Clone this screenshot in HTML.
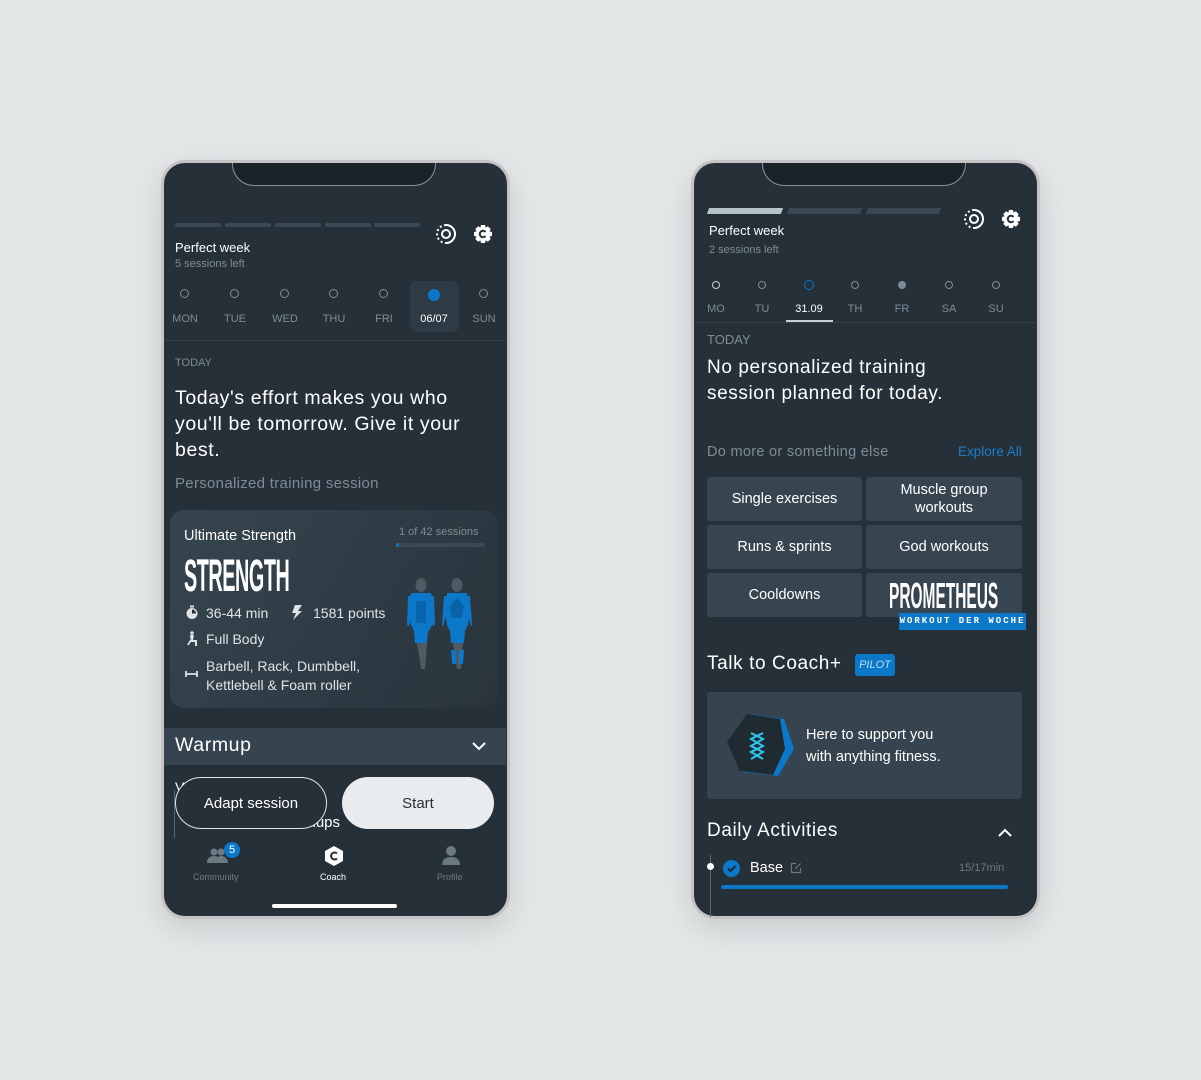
<!DOCTYPE html>
<html><head><meta charset="utf-8">
<style>
*{margin:0;padding:0;box-sizing:border-box}
body{width:1201px;height:1080px;background:#e3e7e8;position:relative;overflow:hidden;font-family:"Liberation Sans",sans-serif;color:#fff}
.a{position:absolute}
.t{position:absolute;white-space:nowrap;line-height:1}
.phone{position:absolute;width:349px;height:759px;border-radius:24px;background:#263038;border:3px solid #c8c2c7;overflow:hidden;box-shadow:0 10px 30px rgba(0,0,0,.12)}
.notch{position:absolute;top:-3px;width:204px;height:26px;background:#1b2328;border:1px solid #8a9399;border-top:none;border-radius:0 0 22px 22px}
.g{color:#7f8c95}
.day{position:absolute;width:50px;text-align:center;font-size:11px;color:#7f8c95}
.dot{position:absolute;width:9px;height:9px;border:1px solid #7f8c95;border-radius:50%}
.tile{position:absolute;background:#364550;border-radius:3px;display:flex;align-items:center;justify-content:center;text-align:center;font-size:14.5px;line-height:18px}
.h{letter-spacing:0.6px}
</style></head><body>

<!-- LEFT PHONE -->
<div class="phone" style="left:161px;top:160px">
  <div class="notch" style="left:68px"></div>
</div>
<div class="a" style="left:175px;top:223px;width:46px;height:4px;border-radius:2px;background:#3a4a55"></div>
<div class="a" style="left:225px;top:223px;width:46px;height:4px;border-radius:2px;background:#3a4a55"></div>
<div class="a" style="left:275px;top:223px;width:46px;height:4px;border-radius:2px;background:#3a4a55"></div>
<div class="a" style="left:325px;top:223px;width:46px;height:4px;border-radius:2px;background:#3a4a55"></div>
<div class="a" style="left:374px;top:223px;width:46px;height:4px;border-radius:2px;background:#3a4a55"></div>
<svg class="a" style="left:435px;top:223px" width="22" height="22" viewBox="0 0 22 22"><path d="M11 2a9 9 0 0 1 0 18" fill="none" stroke="#fff" stroke-width="2"/><path d="M11 2a9 9 0 0 0 0 18" fill="none" stroke="#fff" stroke-width="2" stroke-dasharray="2 2.5"/><circle cx="11" cy="11" r="4" fill="none" stroke="#fff" stroke-width="2"/></svg>
<svg class="a" style="left:473px;top:224px" width="20" height="20" viewBox="0 0 20 20"><path d="M8 1h4l.6 2.6 2.3-1.3 2.8 2.8-1.3 2.3L19 8v4l-2.6.6 1.3 2.3-2.8 2.8-2.3-1.3L12 19H8l-.6-2.6-2.3 1.3-2.8-2.8 1.3-2.3L1 12V8l2.6-.6-1.3-2.3 2.8-2.8 2.3 1.3z" fill="#fff"/><path d="M12.5 8a3.2 3.2 0 1 0 0 4" fill="none" stroke="#263038" stroke-width="2"/></svg>
<div class="t" style="left:175px;top:241px;font-size:13px">Perfect week</div>
<div class="t g" style="left:175px;top:259px;font-size:11px">5 sessions left</div>
<div class="a" style="left:410px;top:281px;width:49px;height:51px;border-radius:7px;background:#2f3b44"></div>
<div class="dot" style="left:180px;top:289px"></div><div class="day" style="left:160px;top:313px">MON</div>
<div class="dot" style="left:230px;top:289px"></div><div class="day" style="left:210px;top:313px">TUE</div>
<div class="dot" style="left:280px;top:289px"></div><div class="day" style="left:260px;top:313px">WED</div>
<div class="dot" style="left:329px;top:289px"></div><div class="day" style="left:309px;top:313px">THU</div>
<div class="dot" style="left:379px;top:289px"></div><div class="day" style="left:359px;top:313px">FRI</div>
<div class="a" style="left:428px;top:289px;width:12px;height:12px;border-radius:50%;background:#0b78c9"></div><div class="day" style="left:409px;top:313px;color:#fff">06/07</div>
<div class="dot" style="left:479px;top:289px"></div><div class="day" style="left:459px;top:313px">SUN</div>
<div class="a" style="left:164px;top:340px;width:342px;height:1px;background:#34404a"></div>
<div class="t g" style="left:175px;top:358px;font-size:11px">TODAY</div>
<div class="a h" style="left:175px;top:385px;font-size:19.5px;line-height:26px;white-space:nowrap">Today's effort makes you who<br>you'll be tomorrow. Give it your<br>best.</div>
<div class="t g" style="left:175px;top:476px;font-size:15px;letter-spacing:0.3px">Personalized training session</div>
<div class="a" style="left:170px;top:510px;width:328px;height:198px;border-radius:14px;background:linear-gradient(120deg,#36454f,#29343c)"></div>
<div class="t" style="left:184px;top:529px;font-size:14.5px">Ultimate Strength</div>
<div class="t g" style="left:399px;top:527px;font-size:11px">1 of 42 sessions</div>
<div class="a" style="left:396px;top:543px;width:89px;height:4px;border-radius:2px;background:#3a4a55"></div>
<div class="a" style="left:396px;top:543px;width:3px;height:4px;border-radius:2px;background:#0b78c9"></div>
<div class="t" style="left:184px;top:553px;font-size:45px;font-weight:bold;transform:scaleX(.44);transform-origin:left top;letter-spacing:-1px">STRENGTH</div>
<svg class="a" style="left:185px;top:605px" width="14" height="15" viewBox="0 0 14 15"><circle cx="7" cy="8.5" r="5.5" fill="#dfe3e6"/><rect x="5" y="0.5" width="4" height="2" fill="#dfe3e6"/><path d="M7 8.5V4.5A4 4 0 0 1 11 8.5z" fill="#263038"/></svg>
<div class="t" style="left:206px;top:606px;font-size:14px;color:#dfe3e6">36-44 min</div>
<svg class="a" style="left:291px;top:605px" width="12" height="15" viewBox="0 0 12 15"><path d="M4 0h7L7 6h4L2 15l3-7H1z" fill="#dfe3e6"/></svg>
<div class="t" style="left:313px;top:606px;font-size:14px;color:#dfe3e6">1581 points</div>
<svg class="a" style="left:186px;top:631px" width="12" height="15" viewBox="0 0 12 15"><g fill="#dfe3e6"><circle cx="6" cy="2" r="1.8"/><path d="M4 4h4l-1 5h4v2H5z"/><path d="M1 14l3-5h2l-3 5zM9 11h2v4H9z"/></g></svg>
<div class="t" style="left:206px;top:632px;font-size:14px;color:#dfe3e6">Full Body</div>
<svg class="a" style="left:185px;top:670px" width="13" height="8" viewBox="0 0 13 8"><path d="M1 1v6M12 1v6M1 4h11" stroke="#dfe3e6" stroke-width="1.8"/></svg>
<div class="a" style="left:206px;top:657px;font-size:14px;line-height:19px;color:#dfe3e6">Barbell, Rack, Dumbbell,<br>Kettlebell &amp; Foam roller</div>
<svg class="a" style="left:406px;top:576px" width="72" height="96" viewBox="0 0 72 96">
<g fill="#4f5a62"><ellipse cx="15" cy="9" rx="5.5" ry="7"/><ellipse cx="51" cy="9" rx="5.5" ry="7"/><path d="M8 55h14l-3 38h-4l-3-20z"/><path d="M44 55h14l-3 38h-4l-3-20z"/></g>
<g fill="#0b78c9"><path d="M5 17h20l3 18-2 14-3 6H8L5 49 3 35z"/><path d="M2 20l3 0 1 20-3 10-2-1z" /><path d="M28 20h-3l-1 20 3 10 2-1z"/><path d="M8 55h14l-1 12H9z"/><path d="M41 17h20l3 18-2 14-3 6H44l-3-6-2-14z"/><path d="M38 20h3l-1 20-3 10h-1z"/><path d="M64 20h-3l1 20 3 10 1-1z"/><path d="M44 55h15l-1 12H45z"/><path d="M45 74h5v14h-4zM53 74h5l-1 14h-4z"/></g>
<g fill="#0963a8"><path d="M10 25h10v22H10z"/><path d="M44 30l7-8 7 8-2 12H46z"/></g>
</svg>
<div class="a" style="left:164px;top:728px;width:342px;height:37px;background:#35444f"></div>
<div class="t h" style="left:175px;top:736px;font-size:19.5px">Warmup</div>
<svg class="a" style="left:471px;top:741px" width="16" height="10" viewBox="0 0 16 10"><path d="M2 2l6 6 6-6" fill="none" stroke="#fff" stroke-width="2"/></svg>
<div class="t" style="left:175px;top:780px;font-size:14px">V</div>
<div class="a" style="left:174px;top:790px;width:1px;height:48px;background:#5a6670"></div>
<div class="t" style="left:300px;top:815px;font-size:15px">shups</div>
<div class="a" style="left:175px;top:777px;width:152px;height:52px;border-radius:26px;border:1px solid #dfe3e6;background:#263038;display:flex;align-items:center;justify-content:center;font-size:15px">Adapt session</div>
<div class="a" style="left:342px;top:777px;width:152px;height:52px;border-radius:26px;background:#e9ecee;color:#263038;display:flex;align-items:center;justify-content:center;font-size:15px">Start</div>
<svg class="a" style="left:207px;top:847px" width="22" height="16" viewBox="0 0 22 16"><g fill="#6d7981"><circle cx="7" cy="5" r="3.5"/><path d="M0 16c0-5 3-7 7-7s7 2 7 7z"/><circle cx="14" cy="5" r="3.5"/><path d="M9 16c0-5 2-7 5-7s7 2 7 7z"/></g></svg>
<div class="a" style="left:224px;top:842px;width:16px;height:16px;border-radius:50%;background:#0b78c9;font-size:11px;text-align:center;line-height:16px">5</div>
<div class="t" style="left:193px;top:873px;font-size:9px;color:#6d7981">Community</div>
<svg class="a" style="left:323px;top:845px" width="22" height="22" viewBox="0 0 22 22"><path d="M11 1l9 5v10l-9 5-9-5V6z" fill="#fff"/><path d="M14 8.5a3.5 3.5 0 1 0 0 5" fill="none" stroke="#263038" stroke-width="2"/></svg>
<div class="t" style="left:320px;top:873px;font-size:9px">Coach</div>
<svg class="a" style="left:441px;top:845px" width="20" height="20" viewBox="0 0 20 20"><g fill="#6d7981"><circle cx="10" cy="6" r="5"/><path d="M1 20c0-6 4-8 9-8s9 2 9 8z"/></g></svg>
<div class="t" style="left:437px;top:873px;font-size:9px;color:#6d7981">Profile</div>
<div class="a" style="left:272px;top:904px;width:125px;height:4px;border-radius:2px;background:#fff"></div>

<!-- RIGHT PHONE -->
<div class="phone" style="left:691px;top:160px">
  <div class="notch" style="left:68px"></div>
</div>
<div class="a" style="left:708px;top:208px;width:74px;height:6px;background:#b5c2c8;transform:skewX(-20deg)"></div>
<div class="a" style="left:788px;top:208px;width:73px;height:6px;background:#3a4a55;transform:skewX(-20deg)"></div>
<div class="a" style="left:867px;top:208px;width:73px;height:6px;background:#3a4a55;transform:skewX(-20deg)"></div>
<svg class="a" style="left:963px;top:208px" width="22" height="22" viewBox="0 0 22 22"><path d="M11 2a9 9 0 0 1 0 18" fill="none" stroke="#fff" stroke-width="2"/><path d="M11 2a9 9 0 0 0 0 18" fill="none" stroke="#fff" stroke-width="2" stroke-dasharray="2 2.5"/><circle cx="11" cy="11" r="4" fill="none" stroke="#fff" stroke-width="2"/></svg>
<svg class="a" style="left:1001px;top:209px" width="20" height="20" viewBox="0 0 20 20"><path d="M8 1h4l.6 2.6 2.3-1.3 2.8 2.8-1.3 2.3L19 8v4l-2.6.6 1.3 2.3-2.8 2.8-2.3-1.3L12 19H8l-.6-2.6-2.3 1.3-2.8-2.8 1.3-2.3L1 12V8l2.6-.6-1.3-2.3 2.8-2.8 2.3 1.3z" fill="#fff"/><path d="M12.5 8a3.2 3.2 0 1 0 0 4" fill="none" stroke="#263038" stroke-width="2"/></svg>
<div class="t" style="left:709px;top:224px;font-size:13px">Perfect week</div>
<div class="t g" style="left:709px;top:245px;font-size:11px">2 sessions left</div>
<div class="dot" style="left:712px;top:281px;border-color:#c8d0d5;width:8px;height:8px"></div><div class="day" style="left:691px;top:303px">MO</div>
<div class="dot" style="left:758px;top:281px;width:8px;height:8px"></div><div class="day" style="left:737px;top:303px">TU</div>
<div class="dot" style="left:804px;top:280px;border-color:#0b78c9;width:10px;height:10px"></div><div class="day" style="left:784px;top:303px;color:#fff">31.09</div>
<div class="dot" style="left:851px;top:281px;width:8px;height:8px"></div><div class="day" style="left:830px;top:303px">TH</div>
<div class="a" style="left:898px;top:281px;width:8px;height:8px;border-radius:50%;background:#7f8c95"></div><div class="day" style="left:877px;top:303px">FR</div>
<div class="dot" style="left:945px;top:281px;width:8px;height:8px"></div><div class="day" style="left:924px;top:303px">SA</div>
<div class="dot" style="left:992px;top:281px;width:8px;height:8px"></div><div class="day" style="left:971px;top:303px">SU</div>
<div class="a" style="left:786px;top:320px;width:47px;height:2px;background:#c8d0d5"></div>
<div class="a" style="left:694px;top:322px;width:342px;height:1px;background:#34404a"></div>
<div class="t g" style="left:707px;top:333px;font-size:13px">TODAY</div>
<div class="a h" style="left:707px;top:355px;font-size:19px;line-height:26px;white-space:nowrap">No personalized training<br>session planned for today.</div>
<div class="t g" style="left:707px;top:445px;font-size:14.5px;letter-spacing:0.3px">Do more or something else</div>
<div class="t" style="left:958px;top:445px;font-size:13.5px;color:#1a7fc9">Explore All</div>
<div class="tile" style="left:707px;top:477px;width:155px;height:44px">Single exercises</div>
<div class="tile" style="left:866px;top:477px;width:156px;height:44px">Muscle group<br>workouts</div>
<div class="tile" style="left:707px;top:525px;width:155px;height:44px">Runs &amp; sprints</div>
<div class="tile" style="left:866px;top:525px;width:156px;height:44px">God workouts</div>
<div class="tile" style="left:707px;top:573px;width:155px;height:44px">Cooldowns</div>
<div class="tile" style="left:866px;top:573px;width:156px;height:44px"></div>
<div class="t" style="left:889px;top:578px;font-size:36px;font-weight:bold;transform:scaleX(.43);transform-origin:left top">PROMETHEUS</div>
<div class="a" style="left:899px;top:613px;width:127px;height:17px;background:#0b78c9;font-size:9px;font-family:'Liberation Mono',monospace;font-weight:bold;letter-spacing:2px;text-align:center;line-height:17px">WORKOUT DER WOCHE</div>
<div class="t h" style="left:707px;top:654px;font-size:19px">Talk to Coach+</div>
<div class="a" style="left:855px;top:654px;width:40px;height:22px;border-radius:3px;background:#0b78c9;font-size:11px;font-style:italic;color:#b8dcf5;text-align:center;line-height:22px">PILOT</div>
<div class="a" style="left:707px;top:692px;width:315px;height:107px;border-radius:3px;background:#35444f"></div>
<svg class="a" style="left:725px;top:712px" width="72" height="66" viewBox="0 0 72 66"><path d="M24 2l35 5 10 30-16 27-35-4L2 30z" fill="#0b78c9"/><path d="M22 2l33 5 5 30-12 26-33-4L2 30z" fill="#1f2a31"/><g fill="none" stroke="#2ec6f2" stroke-width="2"><path d="M26 21l12 6-12 7 12 6-12 7"/><path d="M38 21l-12 6 12 7-12 6 12 7"/></g></svg>
<div class="a" style="left:806px;top:724px;font-size:14.5px;line-height:22px">Here to support you<br>with anything fitness.</div>
<div class="t h" style="left:707px;top:821px;font-size:19px">Daily Activities</div>
<svg class="a" style="left:997px;top:828px" width="16" height="10" viewBox="0 0 16 10"><path d="M2 8l6-6 6 6" fill="none" stroke="#fff" stroke-width="2"/></svg>
<div class="a" style="left:710px;top:855px;width:1px;height:62px;background:#5a6670"></div>
<div class="a" style="left:707px;top:863px;width:7px;height:7px;border-radius:50%;background:#fff"></div>
<div class="a" style="left:723px;top:860px;width:17px;height:17px;border-radius:50%;background:#0b78c9"></div>
<svg class="a" style="left:726px;top:863px" width="11" height="11" viewBox="0 0 11 11"><path d="M2 5.5l2.5 2.5 5-5" fill="none" stroke="#1f2a31" stroke-width="2"/></svg>
<div class="t" style="left:750px;top:861px;font-size:14.5px">Base</div>
<svg class="a" style="left:790px;top:862px" width="12" height="12" viewBox="0 0 12 12"><path d="M6 1.5H1.5v9h9V6" fill="none" stroke="#6d7981" stroke-width="1.2"/><path d="M5 7l5.5-5.5" stroke="#6d7981" stroke-width="1.2"/></svg>
<div class="t" style="left:959px;top:863px;font-size:11px;color:#6d7981">15/17min</div>
<div class="a" style="left:721px;top:885px;width:287px;height:4px;border-radius:2px;background:#0b78c9"></div>
</body></html>
